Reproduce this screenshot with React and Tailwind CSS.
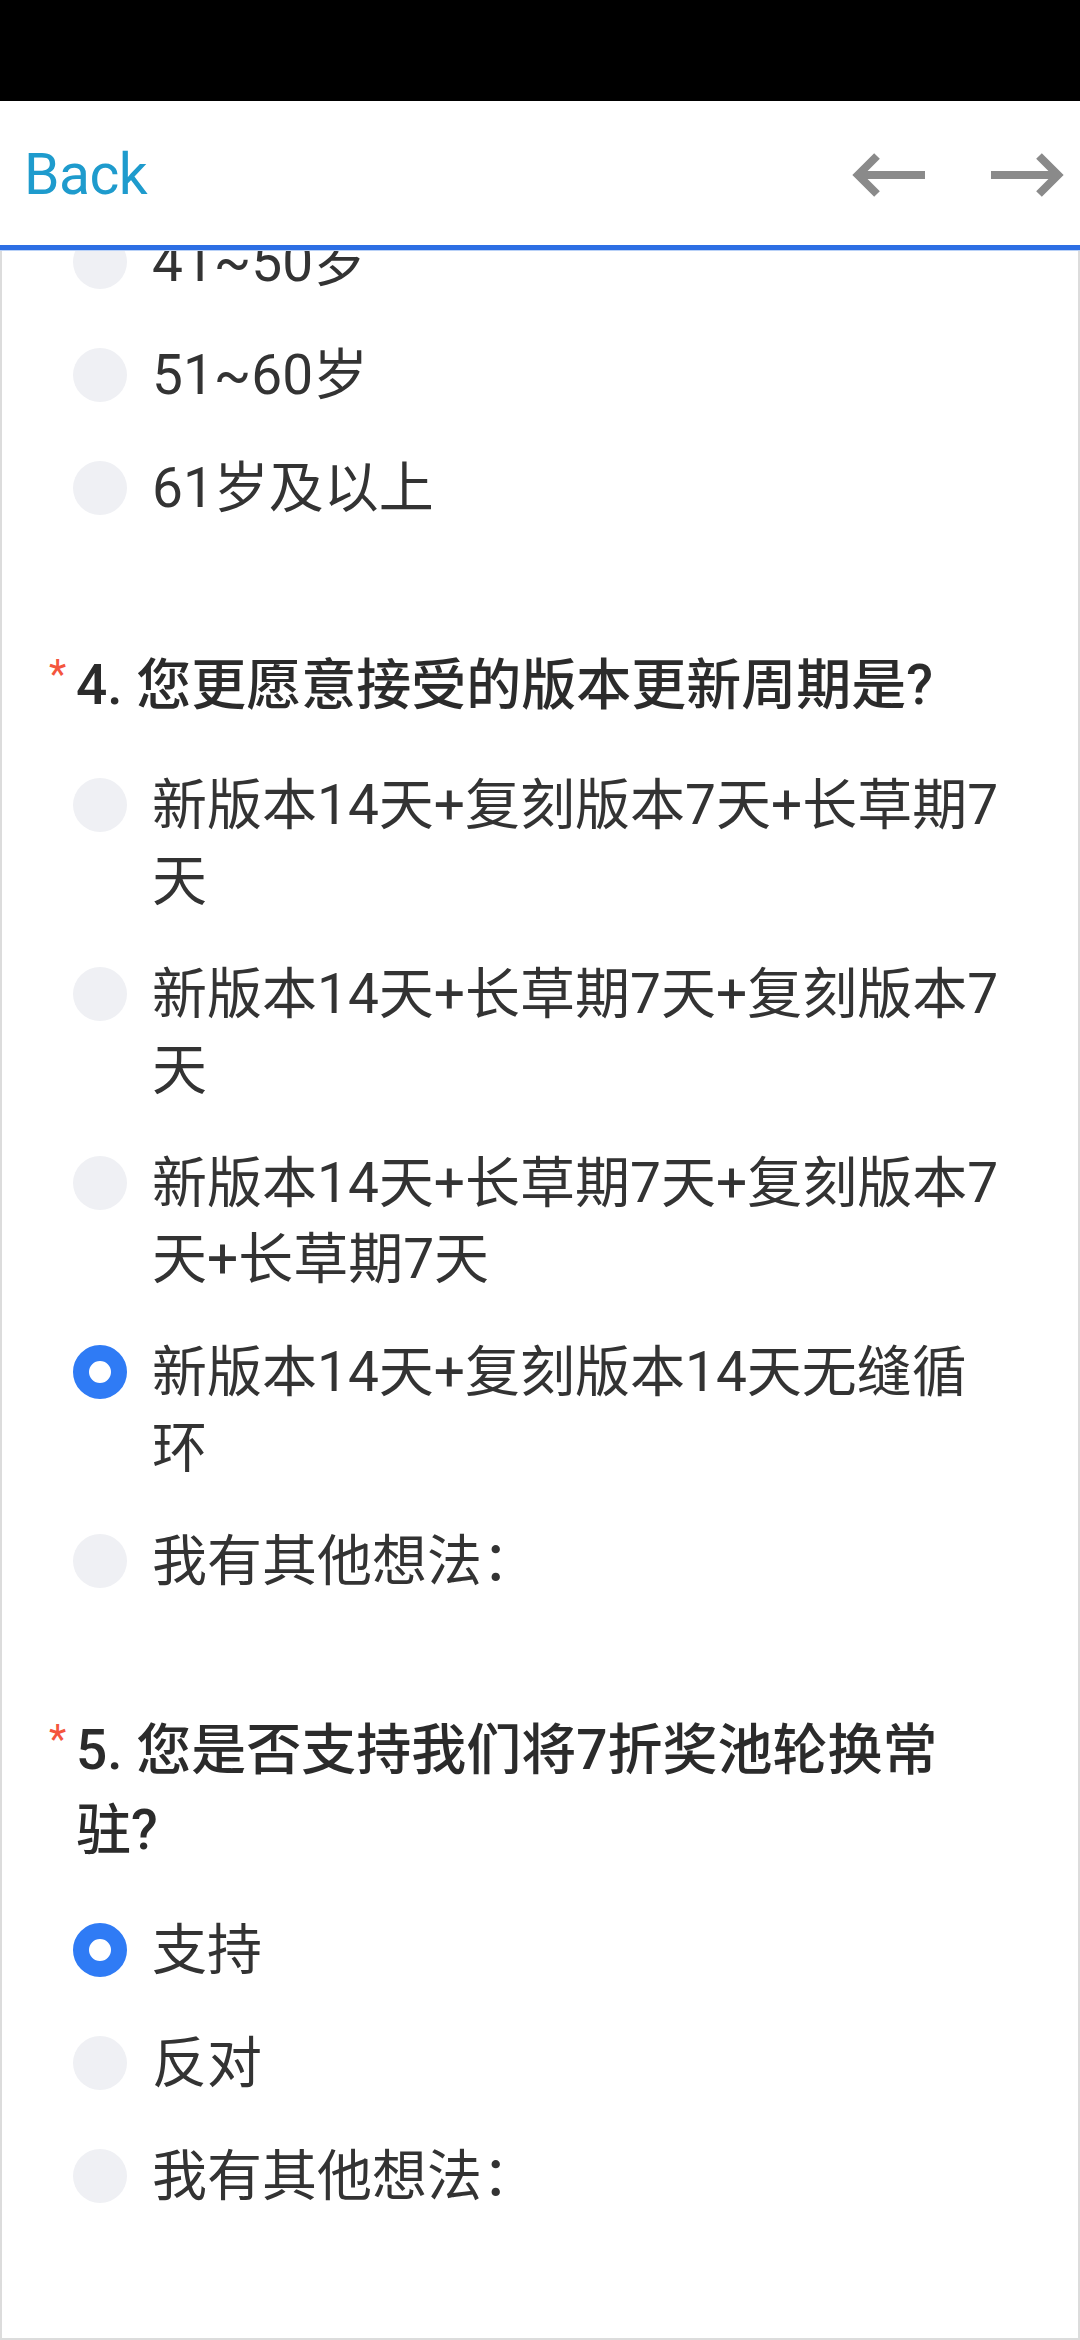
import React from 'react';

const FONT = { fontFamily: 'Roboto, "Noto Sans CJK SC", sans-serif' };

const Arrow = ({ dir = 'left' }) => (
    <svg width="74" height="46" viewBox="0 0 74 46" className={dir === 'right' ? '-scale-x-100' : ''}>
        <path d="M73 23 H6 M25 4 L6 23 L25 42" fill="none" stroke="#8a8a8a" strokeWidth="8" />
    </svg>
);

const Radio = ({ checked }) => (
    <div
        className={`w-[54px] h-[54px] shrink-0 rounded-full mt-[11px] ${checked ? 'border-[16px] border-[#2f7bf5] bg-white' : 'bg-[#eff0f4]'}`}
    />
);

const Option = ({ label, checked }) => (
    <div className="flex items-start gap-[25px] pl-[71px] pr-[40px] pt-[18px] pb-[19px]">
        <Radio checked={checked} />
        <div className="text-[55px] leading-[76px] text-[#333333] w-[860px]">{label}</div>
    </div>
);

const Question = ({ title, className }) => (
    <div className={`flex items-start pl-[47px] ${className}`}>
        <span className="w-[27px] shrink-0 text-[40px] leading-none text-[#f4553d] mt-[10px]">*</span>
        <div className="text-[55px] leading-[80px] font-medium text-[#2b2b2b] w-[890px]">{title}</div>
    </div>
);

const App = () => {
    return (
        <div className="w-[1080px] h-[2340px] flex flex-col bg-white overflow-hidden" style={FONT}>
            {/* status bar */}
            <div className="h-[101px] bg-black shrink-0" />

            {/* top nav */}
            <div className="h-[144px] shrink-0 flex items-center justify-between pl-[24px] pr-[16px] pt-[4px] bg-white">
                <span className="text-[57px] text-[#1e9bcd] tracking-[-0.5px]">Back</span>
                <div className="flex items-center gap-[64px]">
                    <Arrow dir="left" />
                    <Arrow dir="right" />
                </div>
            </div>
            <div className="h-[5px] bg-[#2d6fe4] shrink-0" />
            <div className="h-[1px] bg-[#b9d1f7] shrink-0" />

            {/* scrolled survey body */}
            <div className="flex-1 overflow-hidden border-l-2 border-r-2 border-b-2 border-[#dcdcdc]">
                <div className="-mt-[45px]">
                    <Option label="41~50岁" />
                    <Option label="51~60岁" />
                    <Option label="61岁及以上" />

                    <Question title="4. 您更愿意接受的版本更新周期是?" className="mt-[100px] mb-[24px]" />
                    <Option label="新版本14天+复刻版本7天+长草期7天" />
                    <Option label="新版本14天+长草期7天+复刻版本7天" />
                    <Option label="新版本14天+长草期7天+复刻版本7天+长草期7天" />
                    <Option label="新版本14天+复刻版本14天无缝循环" checked />
                    <Option label="我有其他想法：" />

                    <Question title="5. 您是否支持我们将7折奖池轮换常驻?" className="mt-[92px] mb-[24px]" />
                    <Option label="支持" checked />
                    <Option label="反对" />
                    <Option label="我有其他想法：" />
                </div>
            </div>
        </div>
    );
};

export default App;
